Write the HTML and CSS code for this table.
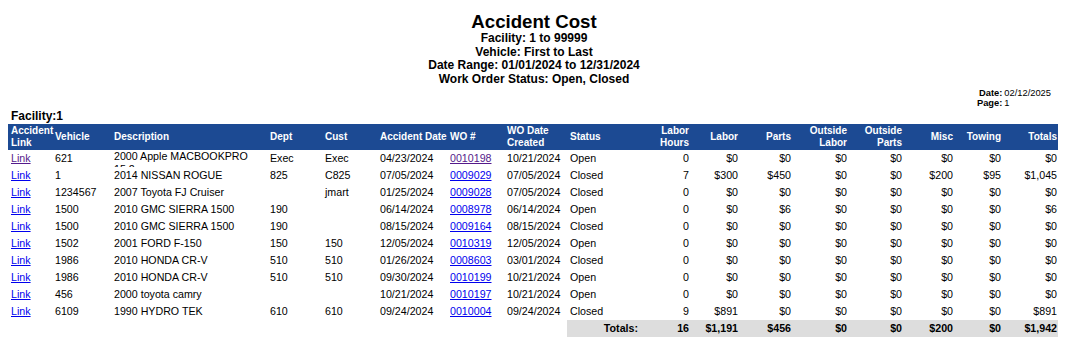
FILE: index.html
```html
<!DOCTYPE html>
<html>
<head>
<meta charset="utf-8">
<link rel="stylesheet" href="styles.css">
</head>
<body>
<div class="report-head">
  <h1 class="title">Accident Cost</h1>
  <div class="sub">Facility: 1 to 99999</div>
  <div class="sub">Vehicle: First to Last</div>
  <div class="sub">Date Range: 01/01/2024 to 12/31/2024</div>
  <div class="sub">Work Order Status: Open, Closed</div>
</div>
<div class="meta-row">
  <table class="meta">
    <tr><td class="lbl">Date:</td><td>02/12/2025</td></tr>
    <tr><td class="lbl">Page:</td><td>1</td></tr>
  </table>
</div>
<div class="body">
  <div class="facility">Facility:1</div>
  <table class="grid">
    <colgroup>
      <col class="c-link"><col class="c-veh"><col class="c-desc"><col class="c-dept"><col class="c-cust"><col class="c-adate"><col class="c-wo"><col class="c-wdate"><col class="c-status"><col class="c-hrs"><col class="c-labor"><col class="c-parts"><col class="c-olab"><col class="c-opar"><col class="c-misc"><col class="c-tow"><col class="c-tot">
    </colgroup>
    <thead>
      <tr>
        <th>Accident<br>Link</th><th>Vehicle</th><th>Description</th><th>Dept</th><th>Cust</th><th>Accident Date</th><th>WO #</th><th>WO Date<br>Created</th><th>Status</th>
        <th class="r">Labor<br>Hours</th><th class="r">Labor</th><th class="r">Parts</th><th class="r">Outside<br>Labor</th><th class="r">Outside<br>Parts</th><th class="r">Misc</th><th class="r">Towing</th><th class="r">Totals</th>
      </tr>
    </thead>
    <tbody>
      <tr><td><a class="lnk visited" href="#">Link</a></td><td>621</td><td><div class="clip">2000 Apple MACBOOKPRO 15.2</div></td><td>Exec</td><td>Exec</td><td>04/23/2024</td><td><a class="lnk visited" href="#">0010198</a></td><td>10/21/2024</td><td>Open</td><td class="r">0</td><td class="r">$0</td><td class="r">$0</td><td class="r">$0</td><td class="r">$0</td><td class="r">$0</td><td class="r">$0</td><td class="r">$0</td></tr>
      <tr><td><a class="lnk" href="#">Link</a></td><td>1</td><td><div class="clip">2014 NISSAN ROGUE</div></td><td>825</td><td>C825</td><td>07/05/2024</td><td><a class="lnk" href="#">0009029</a></td><td>07/05/2024</td><td>Closed</td><td class="r">7</td><td class="r">$300</td><td class="r">$450</td><td class="r">$0</td><td class="r">$0</td><td class="r">$200</td><td class="r">$95</td><td class="r">$1,045</td></tr>
      <tr><td><a class="lnk" href="#">Link</a></td><td>1234567</td><td><div class="clip">2007 Toyota FJ Cruiser</div></td><td></td><td>jmart</td><td>01/25/2024</td><td><a class="lnk" href="#">0009028</a></td><td>07/05/2024</td><td>Closed</td><td class="r">0</td><td class="r">$0</td><td class="r">$0</td><td class="r">$0</td><td class="r">$0</td><td class="r">$0</td><td class="r">$0</td><td class="r">$0</td></tr>
      <tr><td><a class="lnk" href="#">Link</a></td><td>1500</td><td><div class="clip">2010 GMC SIERRA 1500</div></td><td>190</td><td></td><td>06/14/2024</td><td><a class="lnk" href="#">0008978</a></td><td>06/14/2024</td><td>Open</td><td class="r">0</td><td class="r">$0</td><td class="r">$6</td><td class="r">$0</td><td class="r">$0</td><td class="r">$0</td><td class="r">$0</td><td class="r">$6</td></tr>
      <tr><td><a class="lnk" href="#">Link</a></td><td>1500</td><td><div class="clip">2010 GMC SIERRA 1500</div></td><td>190</td><td></td><td>08/15/2024</td><td><a class="lnk" href="#">0009164</a></td><td>08/15/2024</td><td>Closed</td><td class="r">0</td><td class="r">$0</td><td class="r">$0</td><td class="r">$0</td><td class="r">$0</td><td class="r">$0</td><td class="r">$0</td><td class="r">$0</td></tr>
      <tr><td><a class="lnk" href="#">Link</a></td><td>1502</td><td><div class="clip">2001 FORD F-150</div></td><td>150</td><td>150</td><td>12/05/2024</td><td><a class="lnk" href="#">0010319</a></td><td>12/05/2024</td><td>Open</td><td class="r">0</td><td class="r">$0</td><td class="r">$0</td><td class="r">$0</td><td class="r">$0</td><td class="r">$0</td><td class="r">$0</td><td class="r">$0</td></tr>
      <tr><td><a class="lnk" href="#">Link</a></td><td>1986</td><td><div class="clip">2010 HONDA CR-V</div></td><td>510</td><td>510</td><td>01/26/2024</td><td><a class="lnk" href="#">0008603</a></td><td>03/01/2024</td><td>Closed</td><td class="r">0</td><td class="r">$0</td><td class="r">$0</td><td class="r">$0</td><td class="r">$0</td><td class="r">$0</td><td class="r">$0</td><td class="r">$0</td></tr>
      <tr><td><a class="lnk" href="#">Link</a></td><td>1986</td><td><div class="clip">2010 HONDA CR-V</div></td><td>510</td><td>510</td><td>09/30/2024</td><td><a class="lnk" href="#">0010199</a></td><td>10/21/2024</td><td>Open</td><td class="r">0</td><td class="r">$0</td><td class="r">$0</td><td class="r">$0</td><td class="r">$0</td><td class="r">$0</td><td class="r">$0</td><td class="r">$0</td></tr>
      <tr><td><a class="lnk" href="#">Link</a></td><td>456</td><td><div class="clip">2000 toyota camry</div></td><td></td><td></td><td>10/21/2024</td><td><a class="lnk" href="#">0010197</a></td><td>10/21/2024</td><td>Open</td><td class="r">0</td><td class="r">$0</td><td class="r">$0</td><td class="r">$0</td><td class="r">$0</td><td class="r">$0</td><td class="r">$0</td><td class="r">$0</td></tr>
      <tr><td><a class="lnk" href="#">Link</a></td><td>6109</td><td><div class="clip">1990 HYDRO TEK</div></td><td>610</td><td>610</td><td>09/24/2024</td><td><a class="lnk" href="#">0010004</a></td><td>09/24/2024</td><td>Closed</td><td class="r">9</td><td class="r">$891</td><td class="r">$0</td><td class="r">$0</td><td class="r">$0</td><td class="r">$0</td><td class="r">$0</td><td class="r">$891</td></tr>
      <tr class="totals">
        <td colspan="8" class="blank"></td>
        <td class="r tl">Totals:</td><td class="r">16</td><td class="r">$1,191</td><td class="r">$456</td><td class="r">$0</td><td class="r">$0</td><td class="r">$200</td><td class="r">$0</td><td class="r">$1,942</td>
      </tr>
    </tbody>
  </table>
</div>
</body>
</html>
```

FILE: styles.css
```css
html, body {
  margin: 0;
  padding: 0;
  background: #ffffff;
  color: #000000;
  font-family: "Liberation Sans", Arial, sans-serif;
}

.report-head {
  text-align: center;
  padding-top: 11px;
}

.title {
  margin: 0;
  font-size: 18.67px;
  line-height: 21px;
  font-weight: bold;
}

.sub {
  font-size: 12px;
  line-height: 13.6px;
  font-weight: bold;
}

.meta-row {
  display: flex;
  justify-content: flex-end;
  padding-right: 17px;
  margin-top: 1.6px;
}

.meta {
  border-collapse: collapse;
  font-size: 9.33px;
  line-height: 10px;
}

.meta td {
  padding: 0 0 0 2px;
}

.meta td.lbl {
  font-weight: bold;
  text-align: right;
  padding: 0;
}

.body {
  padding: 0 10px 0 8px;
}

.facility {
  font-size: 12px;
  line-height: 14px;
  font-weight: bold;
  margin-top: 1px;
  margin-bottom: 1px;
  padding-left: 3px;
}

.grid {
  border-collapse: collapse;
  table-layout: fixed;
  width: 1050px;
  font-size: 10.67px;
}

.c-link { width: 44px; }
.c-veh { width: 59px; }
.c-desc { width: 156px; }
.c-dept { width: 55px; }
.c-cust { width: 55px; }
.c-adate { width: 70px; }
.c-wo { width: 57px; }
.c-wdate { width: 63px; }
.c-status { width: 74px; }
.c-hrs { width: 49px; }
.c-labor { width: 49px; }
.c-parts { width: 53px; }
.c-olab { width: 56px; }
.c-opar { width: 55px; }
.c-misc { width: 51px; }
.c-tow { width: 48px; }
.c-tot { width: 56px; }

.grid th {
  background: #1c4a93;
  color: #ffffff;
  font-size: 10px;
  line-height: 11.5px;
  font-weight: bold;
  text-align: left;
  vertical-align: middle;
  height: 26px;
  padding: 0 1px 0 3px;
  white-space: nowrap;
  overflow: visible;
}

.grid th.r {
  text-align: right;
}

.grid td {
  height: 17px;
  padding: 0 3px 0 3px;
  line-height: 13px;
  vertical-align: middle;
  white-space: nowrap;
  overflow: hidden;
}

.grid td.r {
  text-align: right;
  padding: 0 1px 0 3px;
}

.clip {
  white-space: normal;
  max-height: 17px;
  overflow: hidden;
}

.lnk {
  color: #0000ee;
  text-decoration: underline;
}

.lnk.visited {
  color: #551a8b;
}

.totals td {
  background: #dddddd;
  font-weight: bold;
  height: 17px;
}

.totals td.blank {
  background: transparent;
}

.totals td.tl {
  padding-right: 3px;
}
```
